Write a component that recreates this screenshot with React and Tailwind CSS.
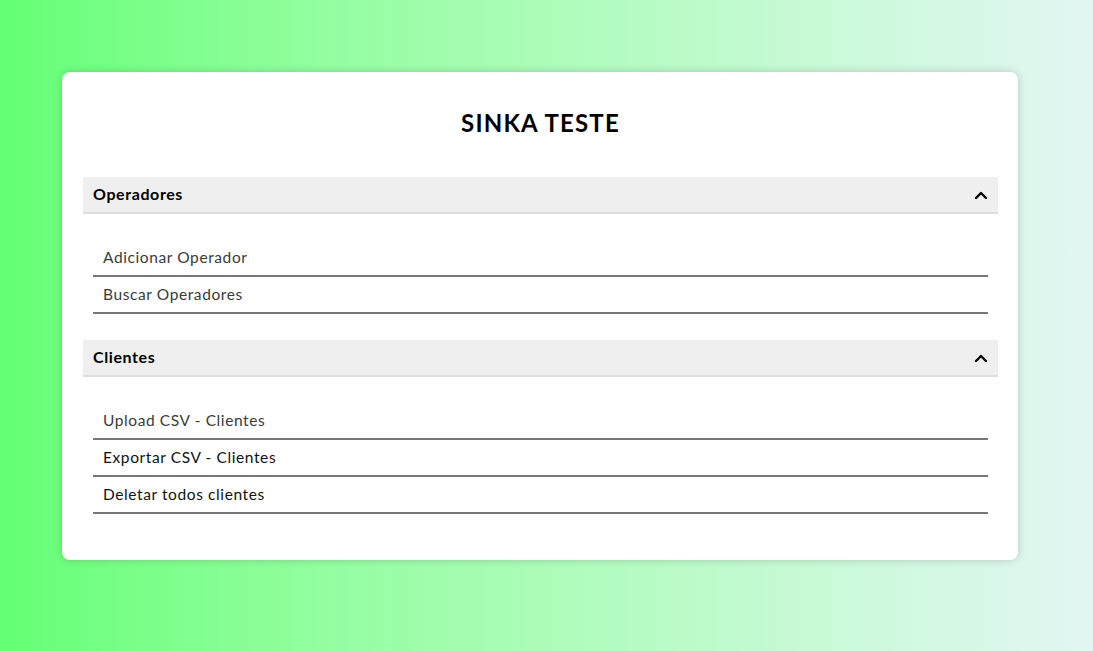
import React from "react";

const Chevron = () => (
  <svg width="14" height="10" viewBox="0 0 14 10">
    <path d="M2 8 L7 3 L12 8" fill="none" stroke="#000" strokeWidth="2.4" strokeLinecap="round" strokeLinejoin="round" />
  </svg>
);

const Item = ({ children, dark }) => (
  <div className={`h-[37px] flex items-center px-[10px] border-b-2 border-[#777] text-[15.5px] tracking-[0.6px] ${dark ? "text-[#111]" : "text-[#3a3a3a]"}`}>
    <span>{children}</span>
  </div>
);

const Section = ({ title, items }) => (
  <div>
    <div className="h-[37px] bg-[#efefef] border-b-2 border-[#dedede] flex items-center justify-between px-[10px]">
      <span className="font-bold text-[16px] tracking-[0.6px] text-black pb-[2px]">{title}</span>
      <Chevron />
    </div>
    <div className="px-[10px] pt-[26px] pb-[26px]">
      {items.map((it) => (
        <Item key={it.t} dark={it.d}>{it.t}</Item>
      ))}
    </div>
  </div>
);

export default function App() {
  return (
    <div
      className="w-[1093px] h-[651px] bg-gradient-to-r from-[#63ff75] to-[#e2f6f3] pt-[72px] px-[62px]"
      style={{ fontFamily: "Lato, 'Open Sans', sans-serif" }}
    >
      <div className="w-[956px] h-[488px] bg-white rounded-[8px] shadow-[0_0_8px_rgba(0,0,0,0.18)] pl-[21px] pr-[20px]">
        <h1 className="text-center font-bold text-[24px] tracking-[1.2px] text-black pt-[37px] pb-[40px] leading-[28px]">SINKA TESTE</h1>
        <Section
          title="Operadores"
          items={[{ t: "Adicionar Operador" }, { t: "Buscar Operadores" }]}
        />
        <Section
          title="Clientes"
          items={[
            { t: "Upload CSV - Clientes" },
            { t: "Exportar CSV - Clientes", d: true },
            { t: "Deletar todos clientes", d: true },
          ]}
        />
      </div>
    </div>
  );
}
